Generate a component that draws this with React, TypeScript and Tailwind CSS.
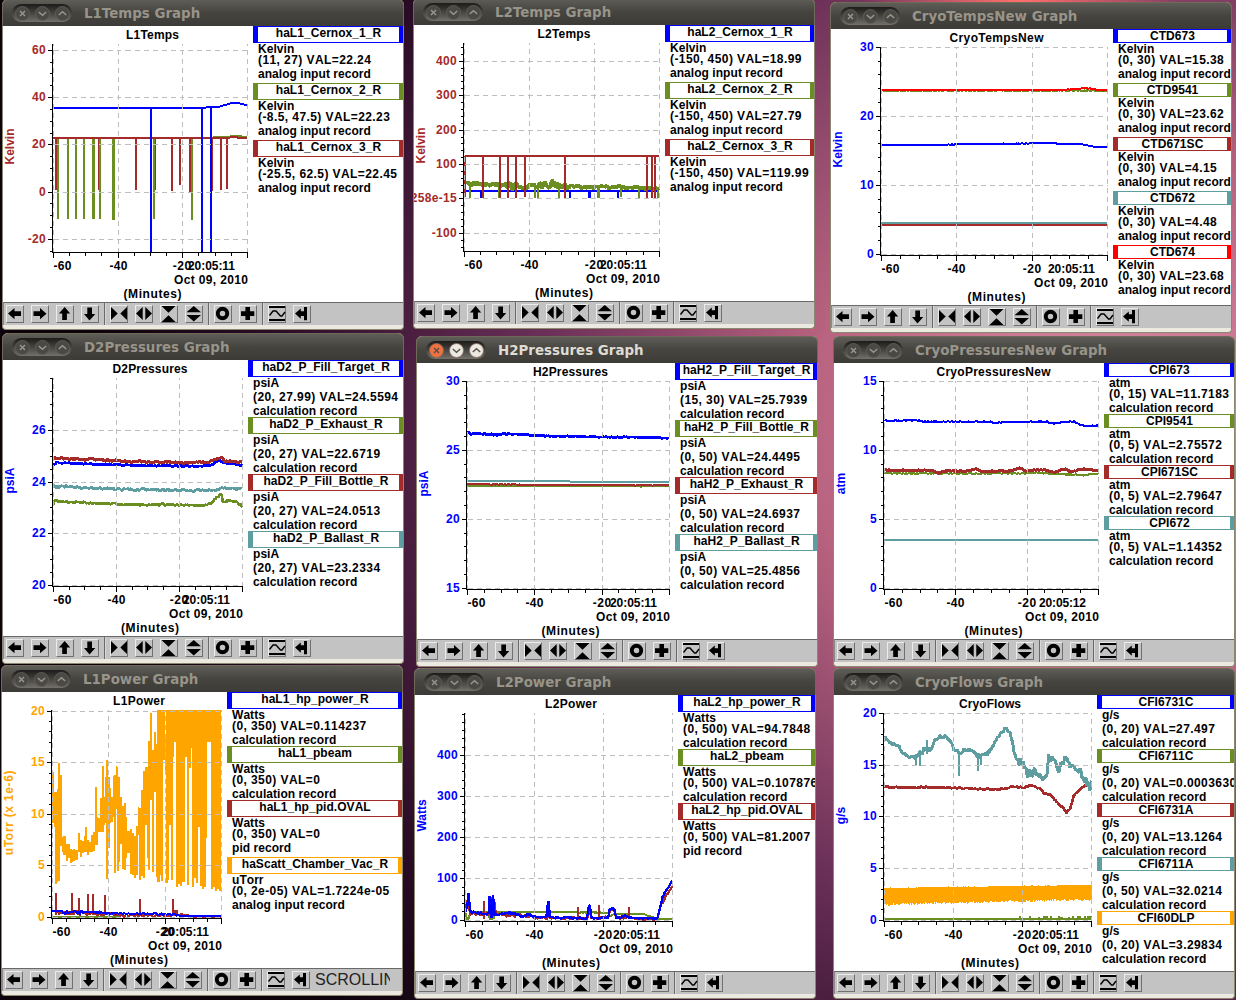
import type { ReactNode } from "react"

// All trace coordinates live on a grid with 3 units per pixel
const GRID = 3
const PLOT_WIDTH = 400
const PLOT_HEIGHT = 276

const BLUE = "#0000ff"
const OLIVE = "#6b8e23"
const BROWN = "#a52a2a"
const TEAL = "#5f9ea0"
const ORANGE = "#ffa500"
const RED = "#ff0000"

const FRAME: Record<string, string> = {
    [BLUE]: "border-[#0000ff]",
    [OLIVE]: "border-[#6b8e23]",
    [BROWN]: "border-[#a52a2a]",
    [TEAL]: "border-[#5f9ea0]",
    [ORANGE]: "border-[#ffa500]",
    [RED]: "border-[#ff0000]",
}

// x, y and an optional noise amplitude that holds until the next point
type Point = [number, number, number?]

type Trace =
    | { kind: "line"; color: string; points: Point[]; noise?: number; width?: number }
    | { kind: "spikes"; color: string; from: number; at: [number, number, number?][] }
    | { kind: "band"; color: string; end: number; columns: [number, number, number][] }

type Channel = { name: string; color: string; lines: [string, string, string] }

type Graph = {
    name: string
    place: string
    origin: [number, number]
    left: number
    right: number
    unit: string
    axisColor: string
    time: string
    // two reference values with their positions on the grid
    scale: { hi: number; hiAt: number; lo: number; loAt: number }
    major: number
    minor: number
    zeroLabel?: string
    titleLength: number
    legend: string
    channels: Channel[]
    traces: Trace[]
    active?: boolean
    status?: string
}

function channel(name: string, color: string, unit: string, value: string, record: string): Channel {
    return { name, color, lines: [unit, value, `${record} record`] }
}

function random(seed: number) {
    let s = seed
    return () => {
        s = (s * 16807) % 2147483647
        return s / 2147483647
    }
}

function linePath(points: Point[], noise: number) {
    const next = random(Math.round(points[0][1] * 31 + points.length * 7 + 11))
    let d = `M${points[0][0]} ${points[0][1]}`
    for (let i = 1; i < points.length; i++) {
        const [x0, y0, n] = points[i - 1]
        const [x1, y1] = points[i]
        const amp = n ?? noise
        if (!amp) {
            d += `L${x1} ${y1}`
            continue
        }
        const steps = Math.max(1, Math.round((x1 - x0) / 3))
        for (let k = 1; k <= steps; k++) {
            const t = k / steps
            const y = y0 + (y1 - y0) * t + (next() - 0.5) * 2 * amp
            d += `L${(x0 + (x1 - x0) * t).toFixed(1)} ${y.toFixed(1)}`
        }
    }
    return d
}

function bandPath(columns: [number, number, number][], end: number) {
    return columns
        .map(([x, top, bottom], i) => {
            const to = i + 1 < columns.length ? columns[i + 1][0] : end
            return `M${x} ${top}H${to}V${bottom}H${x}Z`
        })
        .join("")
}

const flowNoise = random(77)
const flowBand: [number, number, number][] = Array.from({ length: 207 }, (_, i) => {
    const t = i / 207
    return [181 + i * 3, 678 - 9 * t - (flowNoise() > 0.85 ? 2 : 0), 724 - 15 * t + flowNoise() * 7]
})

const vacuumBand: [number, number, number][] = [
    [37, 215, 370], [41, 275, 380], [46, 275, 553], [50, 267, 545], [54, 190, 543],
    [60, 226, 437], [65, 410, 455], [70, 408, 465], [77, 432, 482], [84, 432, 475],
    [89, 447, 488], [95, 450, 485], [100, 447, 482], [106, 450, 480], [113, 400, 455],
    [119, 420, 470], [125, 422, 458], [131, 408, 456], [136, 382, 456], [141, 420, 464],
    [147, 427, 457], [153, 405, 455], [159, 395, 452], [164, 262, 435], [170, 352, 434],
    [174, 355, 396], [180, 293, 395], [186, 198, 395], [192, 290, 375], [195, 232, 370],
    [198, 180, 536], [204, 232, 443], [209, 265, 370], [214, 292, 365], [219, 228, 350],
    [222, 225, 520], [228, 198, 328], [231, 200, 512], [234, 230, 512], [237, 232, 485],
    [240, 290, 432], [246, 318, 508], [251, 308, 510], [257, 350, 475], [262, 392, 460],
    [270, 387, 523], [276, 400, 525], [282, 408, 535], [288, 378, 525], [294, 322, 405],
    [298, 325, 540], [303, 270, 528], [309, 212, 535], [314, 200, 375], [320, 200, 473],
    [324, 123, 510], [330, 40, 300], [336, 150, 515], [342, 95, 277], [348, 132, 530],
    [352, 30, 545], [360, 30, 525], [364, 30, 543], [369, 30, 180], [375, 118, 215],
    [378, 30, 550], [385, 30, 540], [388, 30, 375], [393, 30, 540], [399, 30, 172],
    [402, 30, 127], [408, 30, 562], [414, 30, 553], [420, 30, 558], [426, 30, 545],
    [435, 30, 172], [441, 30, 555], [447, 30, 205], [453, 30, 145], [456, 30, 562],
    [462, 30, 535], [468, 30, 550], [474, 30, 380], [480, 30, 558], [486, 30, 566],
    [492, 30, 562], [498, 30, 415], [501, 30, 127], [513, 30, 568], [519, 30, 560],
    [525, 30, 572], [532, 30, 568], [537, 30, 572],
]

const GRAPHS: Graph[] = [
    {
        name: "L1Temps",
        place: "left-[2px] top-[-1px]",
        origin: [9, 78],
        left: 160,
        right: 742,
        unit: "Kelvin",
        axisColor: BROWN,
        time: "20:05:11",
        scale: { hi: 60, hiAt: 151, lo: -20, loAt: 718 },
        major: 20,
        minor: 5,
        titleLength: 53,
        legend: "w-[150px]",
        channels: [
            channel("haL1_Cernox_1_R", BLUE, "Kelvin", "(11, 27) VAL=22.24", "analog input"),
            channel("haL1_Cernox_2_R", OLIVE, "Kelvin", "(-8.5, 47.5) VAL=22.23", "analog input"),
            channel("haL1_Cernox_3_R", BROWN, "Kelvin", "(-25.5, 62.5) VAL=22.45", "analog input"),
        ],
        traces: [
            { kind: "spikes", color: BROWN, from: 414, at: [[168, 570], [296, 570], [408, 570], [465, 570], [516, 573], [540, 555], [571, 575], [636, 573], [663, 570], [681, 567]] },
            { kind: "spikes", color: OLIVE, from: 414, at: [[174, 657], [204, 657], [228, 657], [252, 657], [281, 657, 9], [300, 657], [341, 659, 9], [462, 657], [576, 659]] },
            { kind: "line", color: OLIVE, points: [[640, 411], [690, 411], [692, 407], [722, 407], [725, 410], [742, 411]] },
            { kind: "line", color: BROWN, points: [[160, 414], [688, 414], [692, 411], [712, 411], [715, 414], [742, 414]] },
            { kind: "spikes", color: BLUE, from: 324, at: [[453, 756], [606, 756], [633, 756]] },
            { kind: "line", color: BLUE, points: [[160, 324], [610, 324], [625, 321], [655, 321], [665, 318], [682, 313], [695, 309], [714, 309], [727, 312], [742, 316]] },
        ],
    },
    {
        name: "L2Temps",
        place: "left-[413px] top-[-2px]",
        origin: [6, 75],
        left: 157,
        right: 742,
        unit: "Kelvin",
        axisColor: BROWN,
        time: "20:05:11",
        scale: { hi: 400, hiAt: 184, lo: -100, loAt: 700 },
        major: 100,
        minor: 20,
        zeroLabel: "258e-15",
        titleLength: 53,
        legend: "w-[149px]",
        channels: [
            channel("haL2_Cernox_1_R", BLUE, "Kelvin", "(-150, 450) VAL=18.99", "analog input"),
            channel("haL2_Cernox_2_R", OLIVE, "Kelvin", "(-150, 450) VAL=27.79", "analog input"),
            channel("haL2_Cernox_3_R", BROWN, "Kelvin", "(-150, 450) VAL=119.99", "analog input"),
        ],
        traces: [
            { kind: "spikes", color: BLUE, from: 573, at: [[207, 593, 8], [473, 593], [532, 593, 9], [618, 593]] },
            { kind: "line", color: BLUE, points: [[158, 573], [742, 573]] },
            { kind: "spikes", color: OLIVE, from: 560, at: [[174, 593], [260, 593], [369, 593], [378, 593], [441, 593], [559, 593, 8], [562, 593], [627, 590], [681, 593], [738, 593]] },
            { kind: "line", color: OLIVE, width: 11, points: [[158, 550, 6], [250, 555, 6], [285, 557, 13], [325, 562, 9], [380, 556, 11], [400, 550, 14], [440, 555, 9], [465, 560, 4], [620, 562, 4], [742, 566]] },
            { kind: "spikes", color: BROWN, from: 467, at: [[160, 590], [213, 593], [264, 595], [288, 593], [312, 593], [339, 590], [459, 593], [705, 593], [720, 593], [729, 593]] },
            { kind: "line", color: BROWN, points: [[158, 468], [742, 468]] },
        ],
    },
    {
        name: "CryoTempsNew",
        place: "left-[830px] top-[2px]",
        origin: [21, 87],
        left: 172,
        right: 850,
        unit: "Kelvin",
        axisColor: BLUE,
        time: "20:05:11",
        scale: { hi: 30, hiAt: 142, lo: 0, loAt: 763 },
        major: 10,
        minor: 2,
        titleLength: 94,
        legend: "w-[118px]",
        channels: [
            channel("CTD673", BLUE, "Kelvin", "(0, 30) VAL=15.38", "analog input"),
            channel("CTD9541", OLIVE, "Kelvin", "(0, 30) VAL=23.62", "analog input"),
            channel("CTD671SC", BROWN, "Kelvin", "(0, 30) VAL=4.15", "analog input"),
            channel("CTD672", TEAL, "Kelvin", "(0, 30) VAL=4.48", "analog input"),
            channel("CTD674", RED, "Kelvin", "(0, 30) VAL=23.68", "analog input"),
        ],
        traces: [
            { kind: "line", color: BLUE, points: [[172, 435], [370, 435, 2], [410, 432, 1], [580, 431, 1], [640, 429], [690, 429], [700, 431], [770, 432], [800, 438], [815, 441], [850, 441]] },
            { kind: "line", color: OLIVE, noise: 1.5, points: [[172, 272], [850, 272]] },
            { kind: "line", color: TEAL, noise: 1.5, points: [[172, 669], [850, 669]] },
            { kind: "line", color: BROWN, points: [[172, 675], [850, 675]] },
            { kind: "line", color: RED, noise: 1, points: [[172, 270], [710, 270], [760, 267], [785, 264], [820, 269], [850, 272]] },
        ],
    },
    {
        name: "D2Pressures",
        place: "left-[2px] top-[333px]",
        origin: [9, 81],
        left: 160,
        right: 727,
        unit: "psiA",
        axisColor: BLUE,
        time: "20:05:11",
        scale: { hi: 26, hiAt: 292, lo: 20, loAt: 757 },
        major: 2,
        minor: 0.5,
        titleLength: 75,
        legend: "w-[155px]",
        channels: [
            channel("haD2_P_Fill_Target_R", BLUE, "psiA", "(20, 27.99) VAL=24.5594", "calculation"),
            channel("haD2_P_Exhaust_R", OLIVE, "psiA", "(20, 27) VAL=22.6719", "calculation"),
            channel("haD2_P_Fill_Bottle_R", BROWN, "psiA", "(20, 27) VAL=24.0513", "calculation"),
            channel("haD2_P_Ballast_R", TEAL, "psiA", "(20, 27) VAL=23.2334", "calculation"),
        ],
        traces: [
            { kind: "line", color: BLUE, noise: 2, width: 8, points: [[160, 398, 5], [172, 389], [300, 394], [450, 398], [600, 400], [630, 398], [650, 386], [660, 382], [672, 391], [710, 393], [727, 400]] },
            { kind: "line", color: TEAL, noise: 4, width: 8, points: [[160, 461, 6], [210, 462, 4], [350, 468], [500, 471], [600, 473, 3], [650, 471, 3], [668, 466], [727, 467]] },
            { kind: "line", color: OLIVE, noise: 3, width: 8, points: [[160, 515], [164, 504], [250, 509], [400, 515], [500, 515], [600, 517], [630, 512], [650, 494], [665, 482], [668, 508], [690, 500], [710, 508], [727, 520]] },
            { kind: "line", color: BROWN, noise: 3.5, width: 9, points: [[160, 375], [300, 381], [420, 386], [540, 389, 2.5], [630, 387, 2.5], [655, 374], [668, 374], [672, 385], [727, 387]] },
        ],
    },
    {
        name: "H2Pressures",
        place: "left-[416px] top-[336px]",
        origin: [15, 90],
        left: 166,
        right: 772,
        unit: "psiA",
        axisColor: BLUE,
        time: "20:05:11",
        scale: { hi: 30, hiAt: 145, lo: 15, loAt: 766 },
        major: 5,
        minor: 1,
        titleLength: 75,
        legend: "w-[142px]",
        active: true,
        channels: [
            channel("haH2_P_Fill_Target_R", BLUE, "psiA", "(15, 30) VAL=25.7939", "calculation"),
            channel("haH2_P_Fill_Bottle_R", OLIVE, "psiA", "(0, 50) VAL=24.4495", "calculation"),
            channel("haH2_P_Exhaust_R", BROWN, "psiA", "(0, 50) VAL=24.6937", "calculation"),
            channel("haH2_P_Ballast_R", TEAL, "psiA", "(0, 50) VAL=25.4856", "calculation"),
        ],
        traces: [
            { kind: "line", color: TEAL, noise: 0.8, points: [[166, 444], [450, 444, 0], [490, 447, 0], [772, 447]] },
            { kind: "line", color: OLIVE, noise: 1, points: [[166, 458], [772, 460]] },
            { kind: "line", color: BROWN, noise: 1, points: [[166, 453], [400, 456], [772, 457]] },
            { kind: "line", color: BLUE, noise: 2, width: 8, points: [[166, 301, 4], [250, 304, 4], [290, 303], [400, 309], [600, 312], [772, 315]] },
        ],
    },
    {
        name: "CryoPressuresNew",
        place: "left-[833px] top-[336px]",
        origin: [30, 90],
        left: 181,
        right: 823,
        unit: "atm",
        axisColor: BLUE,
        time: "20:05:12",
        scale: { hi: 15, hiAt: 145, lo: 0, loAt: 766 },
        major: 5,
        minor: 1,
        titleLength: 114,
        legend: "w-[130px]",
        channels: [
            channel("CPI673", BLUE, "atm", "(0, 15) VAL=11.7183", "calculation"),
            channel("CPI9541", OLIVE, "atm", "(0, 5) VAL=2.75572", "calculation"),
            channel("CPI671SC", BROWN, "atm", "(0, 5) VAL=2.79647", "calculation"),
            channel("CPI672", TEAL, "atm", "(0, 5) VAL=1.14352", "calculation"),
        ],
        traces: [
            { kind: "line", color: BLUE, noise: 2, points: [[181, 264], [280, 262], [300, 266], [500, 266], [515, 271], [540, 267], [670, 266], [690, 272], [720, 267], [750, 266], [780, 279], [823, 279]] },
            { kind: "line", color: OLIVE, noise: 2, points: [[181, 421], [600, 421], [640, 419], [690, 423], [780, 426], [823, 423]] },
            { kind: "line", color: BROWN, noise: 2, width: 9, points: [[181, 412], [320, 412], [345, 420], [370, 412], [420, 415], [455, 409], [480, 416], [560, 414], [585, 404], [605, 414], [660, 409], [690, 418], [720, 408], [745, 416], [770, 408], [823, 413]] },
            { kind: "line", color: TEAL, points: [[181, 621], [823, 621]] },
        ],
    },
    {
        name: "L1Power",
        place: "left-[1px] top-[665px]",
        origin: [-114, -24],
        left: 37,
        right: 544,
        unit: "uTorr (x 1e-6)",
        axisColor: ORANGE,
        time: "20:05:11",
        scale: { hi: 20, hiAt: 34, lo: 0, loAt: 652 },
        major: 5,
        minor: 1,
        titleLength: 52,
        legend: "w-[175px]",
        status: "SCROLLING",
        channels: [
            channel("haL1_hp_power_R", BLUE, "Watts", "(0, 350) VAL=0.114237", "calculation"),
            channel("haL1_pbeam", OLIVE, "Watts", "(0, 350) VAL=0", "calculation"),
            channel("haL1_hp_pid.OVAL", BROWN, "Watts", "(0, 350) VAL=0", "pid"),
            channel("haScatt_Chamber_Vac_R", ORANGE, "uTorr", "(0, 2e-05) VAL=1.7224e-05", "analog input"),
        ],
        traces: [
            { kind: "band", color: ORANGE, end: 544, columns: vacuumBand },
            { kind: "line", color: BROWN, noise: 8, points: [[48, 638], [200, 641, 4], [240, 646, 5], [350, 646, 6], [425, 645, 3], [490, 652, 1], [544, 652]] },
            { kind: "spikes", color: BROWN, from: 645, at: [[48, 580], [96, 580], [117, 595], [144, 583], [159, 583], [195, 586], [300, 598], [399, 598], [405, 631, 15]] },
            { kind: "line", color: OLIVE, points: [[37, 651], [240, 651]] },
            { kind: "line", color: BLUE, noise: 1, points: [[37, 633], [66, 633, 8], [86, 637, 1], [100, 634, 7], [128, 637, 1], [165, 637, 7], [182, 637, 1], [200, 640], [340, 641, 3], [410, 645], [425, 649, 0], [544, 648]] },
        ],
    },
    {
        name: "L2Power",
        place: "left-[414px] top-[668px]",
        origin: [9, 99],
        left: 160,
        right: 781,
        unit: "Watts",
        axisColor: BLUE,
        time: "20:05:11",
        scale: { hi: 400, hiAt: 280, lo: 0, loAt: 774 },
        major: 100,
        minor: 20,
        titleLength: 52,
        legend: "w-[137px]",
        channels: [
            channel("haL2_hp_power_R", BLUE, "Watts", "(0, 500) VAL=94.7848", "calculation"),
            channel("haL2_pbeam", OLIVE, "Watts", "(0, 500) VAL=0.107876", "calculation"),
            channel("haL2_hp_pid.OVAL", BROWN, "Watts", "(0, 500) VAL=81.2007", "pid"),
        ],
        traces: [
            { kind: "line", color: OLIVE, noise: 1, points: [[160, 750], [165, 772], [170, 770], [176, 750], [228, 750], [233, 770], [245, 770], [250, 750], [405, 750], [588, 752], [594, 762], [606, 756], [700, 757], [706, 762], [722, 764], [728, 771, 0], [781, 771]] },
            { kind: "line", color: BROWN, noise: 5, width: 7, points: [[160, 745], [169, 705], [174, 755], [230, 757], [236, 710], [246, 715], [252, 758], [350, 763], [404, 768], [409, 725], [413, 768, 4], [525, 771, 3], [532, 740], [538, 770, 3], [588, 766, 3], [596, 742], [606, 745], [612, 766], [700, 772, 2], [735, 773, 4], [748, 727], [765, 697], [781, 674]] },
            { kind: "spikes", color: BROWN, from: 770, at: [[216, 718], [498, 735], [560, 730], [651, 735]] },
            { kind: "line", color: BLUE, noise: 4, width: 7, points: [[160, 750], [165, 740], [170, 693], [174, 750], [230, 756], [233, 705], [238, 765], [243, 698], [248, 758], [290, 752], [330, 763], [350, 758], [370, 765, 1], [403, 766], [408, 718, 1], [411, 718, 1], [413, 766, 3], [525, 769, 2], [531, 730], [534, 733, 2], [539, 768, 2], [588, 768, 1], [593, 741, 1], [606, 738, 2], [613, 768], [640, 763, 2], [660, 768, 1], [735, 770, 3], [746, 728], [754, 700], [765, 684], [781, 656]] },
        ],
    },
    {
        name: "CryoFlows",
        place: "left-[833px] top-[668px]",
        origin: [30, 99],
        left: 181,
        right: 803,
        unit: "g/s",
        axisColor: BLUE,
        time: "20:05:11",
        scale: { hi: 20, hiAt: 154, lo: 0, loAt: 774 },
        major: 5,
        minor: 1,
        titleLength: 62,
        legend: "w-[137px]",
        channels: [
            channel("CFI6731C", BLUE, "g/s", "(0, 20) VAL=27.497", "calculation"),
            channel("CFI6711C", OLIVE, "g/s", "(0, 20) VAL=0.000363012", "calculation"),
            channel("CFI6731A", BROWN, "g/s", "(0, 20) VAL=13.1264", "calculation"),
            channel("CFI6711A", TEAL, "g/s", "(0, 50) VAL=32.0214", "calculation"),
            channel("CFI60DLP", ORANGE, "g/s", "(0, 20) VAL=3.29834", "calculation"),
        ],
        traces: [
            { kind: "band", color: ORANGE, end: 803, columns: flowBand },
            { kind: "line", color: OLIVE, points: [[181, 771], [803, 771]] },
            { kind: "spikes", color: OLIVE, from: 772, at: [[588, 762], [618, 762], [645, 765], [665, 762, 15], [680, 762], [705, 762], [711, 765, 12], [734, 765], [747, 762], [766, 762, 12], [782, 762], [795, 762, 15]] },
            { kind: "line", color: BROWN, noise: 2.5, width: 8, points: [[181, 376], [350, 376], [450, 380], [520, 383], [550, 380], [562, 373], [600, 376], [625, 370], [650, 382], [660, 394], [682, 399], [700, 423], [715, 435], [727, 453], [738, 440], [750, 400], [770, 380], [790, 368], [803, 363]] },
            { kind: "spikes", color: TEAL, from: 275, at: [[276, 313], [288, 313], [404, 341], [463, 328], [472, 308], [308, 235]] },
            { kind: "line", color: TEAL, noise: 7, width: 9, points: [[181, 226, 4], [200, 242, 4], [222, 250, 5], [238, 277, 5], [260, 285], [275, 288, 13], [290, 280], [300, 260], [320, 262, 5], [335, 232, 5], [350, 225, 5], [368, 222, 5], [380, 238, 5], [390, 266, 6], [410, 270], [435, 258], [450, 276], [475, 283], [498, 268, 5], [515, 235, 5], [530, 215, 6], [545, 196, 6], [560, 215, 5], [570, 265], [580, 296, 13], [600, 310, 10], [612, 337, 12], [635, 330, 13], [655, 350, 9], [670, 338, 12], [674, 285, 12], [692, 300, 12], [702, 328, 10], [722, 290, 12], [735, 308], [765, 328, 14], [783, 355, 16], [797, 380, 12], [803, 365]] },
        ],
    },
]

function Plot({ graph }: { graph: Graph }) {
    const { origin, scale, axisColor } = graph
    const px = (v: number) => Math.floor((v - origin[0]) / GRID) + 0.5
    const py = (v: number) => Math.floor((v - origin[1]) / GRID) + 0.5

    const left = px(graph.left)
    const right = px(graph.right)
    const axis = left - 1
    const top = 18
    const bottom = 226.5
    const center = (left + right) / 2 + 2
    const xAt = (m: number) => px(graph.left + ((graph.right - graph.left) * (m + 60)) / 60)
    const yAt = (v: number) => py(scale.loAt + ((scale.hiAt - scale.loAt) * (v - scale.lo)) / (scale.hi - scale.lo))

    const majors: number[] = []
    for (let v = scale.lo; v <= scale.hi + 0.001; v += graph.major) majors.push(v)
    const minors: number[] = []
    for (let v = scale.lo - graph.major; v < scale.hi + graph.major * 2; v += graph.minor) {
        const y = yAt(v)
        if (y >= top && y <= bottom) minors.push(v)
    }
    const clip = `clip-${graph.name}`

    return (
        <svg
            width={PLOT_WIDTH}
            height={PLOT_HEIGHT}
            viewBox={`0 0 ${PLOT_WIDTH} ${PLOT_HEIGHT}`}
            className="col-start-1 row-start-1 block font-['Liberation_Sans',sans-serif] text-[12px] font-bold"
        >
            <clipPath id={clip}>
                <rect x={left - 0.5} y={top} width={right - left + 1} height={bottom - top} />
            </clipPath>
            <g clipPath={`url(#${clip})`}>
                <g transform={`scale(${1 / GRID}) translate(${-origin[0]} ${-origin[1]})`} shapeRendering="crispEdges" fill="none">
                    {graph.traces.map((trace, i) => {
                        if (trace.kind === "band") {
                            return <path key={i} d={bandPath(trace.columns, trace.end)} fill={trace.color} />
                        }
                        if (trace.kind === "spikes") {
                            return trace.at.map(([x, y, w]) => (
                                <path key={`${i}-${x}`} d={`M${x} ${trace.from}V${y}`} stroke={trace.color} strokeWidth={w ?? 6} />
                            ))
                        }
                        return (
                            <path key={i} d={linePath(trace.points, trace.noise ?? 0)} stroke={trace.color} strokeWidth={trace.width ?? 6} strokeLinejoin="bevel" />
                        )
                    })}
                </g>
            </g>

            {/* Grid */}
            <g stroke="#bebebe" strokeDasharray="5 4" shapeRendering="crispEdges">
                {majors.map((v) => (
                    <path key={v} d={`M${left} ${yAt(v)}H${right}`} />
                ))}
                {[-60, -40, -20, 0].map((m) => (
                    <path key={m} d={`M${xAt(m)} ${bottom}V${top}`} />
                ))}
            </g>

            {/* Axes */}
            <g stroke="#000" shapeRendering="crispEdges" fill="none">
                <path d={`M${axis} ${top}V${bottom}M${left - 0.5} ${bottom}H${right + 0.5}`} />
                {majors.map((v) => (
                    <path key={v} d={`M${axis - 5} ${yAt(v)}H${axis}`} />
                ))}
                {minors.map((v) => (
                    <path key={v} d={`M${axis - 2.5} ${yAt(v)}H${axis}`} />
                ))}
                {Array.from({ length: 13 }, (_, i) => i * 5 - 60).map((m) => (
                    <path key={m} d={`M${xAt(m)} ${bottom}v${m % 20 === 0 ? 5.5 : 3}`} />
                ))}
            </g>

            <g fill={axisColor} textAnchor="end" letterSpacing="0.3">
                {majors.map((v) => (
                    <text key={v} x={axis - 6.5} y={yAt(v) + 3.5}>
                        {v === 0 && graph.zeroLabel ? graph.zeroLabel : v}
                    </text>
                ))}
            </g>
            <text transform="translate(11 120.5) rotate(-90)" textAnchor="middle" fill={axisColor} letterSpacing={graph.unit.length > 8 ? 0.7 : 0}>
                {graph.unit}
            </text>

            <g textAnchor="middle">
                <text x={left + 9} y={243.5} textLength={18}>-60</text>
                <text x={xAt(-40)} y={243.5} textLength={18}>-40</text>
                <text x={xAt(-20) - 0.5} y={243.5} textLength={18.5}>-20</text>
                <text x={right - 36} y={243.5} textLength={47}>{graph.time}</text>
                <text x={right - 36.5} y={257.5} textLength={74}>Oct 09, 2010</text>
                <text x={center} y={271.5} textLength={58}>(Minutes)</text>
                <text x={center} y={13} textLength={graph.titleLength}>{graph.name}</text>
            </g>
        </svg>
    )
}

// Lines are packed to the ink height, so text without descenders takes less room
function InkLine({ text, spaced }: { text: string; spaced?: boolean }) {
    const deep = /[gjpqy_(,]/.test(text)
    return (
        <div className={`flex whitespace-nowrap ${deep ? "h-[14px]" : "h-[11px]"} ${spaced ? "tracking-[0.42px]" : "tracking-[0.05px]"}`}>
            <span className="leading-[12px]">{text}</span>
        </div>
    )
}

function Legend({ channels, width }: { channels: Channel[]; width: string }) {
    return (
        <div className={`z-10 col-start-1 row-start-1 justify-self-end overflow-hidden bg-white font-['Liberation_Sans',sans-serif] text-[12px] font-bold text-black [font-kerning:none] ${width}`}>
            {channels.map((c) => (
                <div key={c.name} className="pb-px">
                    <div className={`flex justify-center border-y border-r-4 border-l-5 pb-px ${FRAME[c.color]}`}>
                        <InkLine text={c.name} />
                    </div>
                    <div className="pl-[5px]">
                        <InkLine text={c.lines[0]} />
                        <InkLine text={c.lines[1]} spaced />
                        <InkLine text={c.lines[2]} />
                    </div>
                </div>
            ))}
        </div>
    )
}

function ToolButton({ children }: { children: ReactNode }) {
    return (
        <button className="h-[18px] w-[18px] shrink-0 border border-t-[#ececec] border-r-[#707070] border-b-[#707070] border-l-[#ececec] bg-[#c3c3c3]">
            <svg width="18" height="18" viewBox="0 0 18 18" className="-m-px block max-w-none" fill="#000">
                {children}
            </svg>
        </button>
    )
}

function Divider() {
    return <div className="-mt-[2px] h-[22px] w-px shrink-0 bg-[#696969] shadow-[1px_0_0_#d8d8d8]" />
}

const ARROW = "M2 8.5L8.5 3V6.3H15V11H8.5V14.3Z"

function Toolbar({ status }: { status?: string }) {
    return (
        <div className="flex h-[23px] items-start border-t border-l border-t-[#696969] border-l-[#8a8a8a] bg-[#c3c3c3] pt-[2px] pl-[2px]">
            <div className="flex gap-[7px] pr-[5px]">
                <ToolButton><path d={ARROW} /></ToolButton>
                <ToolButton><path d={ARROW} transform="rotate(180 8.75 8.6)" /></ToolButton>
                <ToolButton><path d={ARROW} transform="rotate(90 8.6 8.6)" /></ToolButton>
                <ToolButton><path d={ARROW} transform="rotate(-90 8.75 8.75)" /></ToolButton>
            </div>
            <Divider />
            <div className="flex gap-[7px] px-[5px]">
                <ToolButton><path d="M1 2L7.7 8.5L1 15ZM17 2L10.3 8.5L17 15Z" /></ToolButton>
                <ToolButton><path d="M7.7 2L1 8.5L7.7 15ZM10.3 2L17 8.5L10.3 15Z" /></ToolButton>
                <ToolButton><path d="M1.5 1H15.5L8.5 7.8ZM1.5 17H15.5L8.5 10.2Z" /></ToolButton>
                <ToolButton><path d="M1.5 7.3H16L8.75 1ZM1.5 10H16L8.75 16.5Z" /></ToolButton>
            </div>
            <Divider />
            <div className="flex gap-[7px] px-[5px]">
                <ToolButton><circle cx="8.5" cy="8.5" r="4.7" fill="none" stroke="#000" strokeWidth="3.9" /></ToolButton>
                <ToolButton><path d="M6.4 2H11V6.3H15.3V11H11V15H6.4V11H2V6.3H6.4Z" /></ToolButton>
            </div>
            <Divider />
            <div className="flex gap-[7px] px-[5px]">
                <ToolButton>
                    <path d="M1 1H17V3H1ZM1 14H17V16H1Z" />
                    <path d="M1.5 10.5L5 6H8L12.5 11H14L17 7" fill="none" stroke="#000" strokeWidth="1.4" />
                </ToolButton>
                <ToolButton><path d="M2 8.5L7.8 3.4V6.3H11V2H14V15.3H11V11H7.8V13.8Z" /></ToolButton>
            </div>
            {status && (
                <div className="w-[75px] overflow-hidden font-['Liberation_Sans',sans-serif] text-[16px] leading-[18px] whitespace-nowrap text-[#222]">
                    {status}
                </div>
            )}
        </div>
    )
}

const CONTROLS = ["M5 5L10 10M10 5L5 10", "M3.8 6L7.5 9.3L11.2 6", "M3.8 9L7.5 5.7L11.2 9"]

function TitleBar({ title, active }: { title: string; active?: boolean }) {
    return (
        <div className="-mx-px flex h-[27px] items-center rounded-t-[6px] border border-b-0 border-[#6f6a58] bg-linear-to-b from-[#5e5d57] via-[#45443f] to-[#3c3b37] pl-[9px]">
            <div className="flex h-[18px] w-[60px] items-center justify-between rounded-full bg-linear-to-b from-[#1d1c1a] to-[#73716a] px-[2.5px]">
                {CONTROLS.map((d, i) => (
                    <svg key={d} width="15" height="15" viewBox="0 0 15 15" fill="none">
                        <circle cx="7.5" cy="7.5" r="7" fill={active ? (i === 0 ? "#f0703f" : "#ece9e2") : "#4a4944"} stroke={active ? "#8a6a58" : "#62605a"} strokeWidth="0.8" />
                        <path d={d} stroke={active ? "#55524c" : "#9a978f"} strokeWidth="1.4" />
                    </svg>
                ))}
            </div>
            <span className={`ml-[12px] pt-px font-['DejaVu_Sans',sans-serif] text-[13.4px] leading-[26px] font-bold whitespace-nowrap ${active ? "text-[#dfdbd2]" : "text-[#98948a]"}`}>
                {title}
            </span>
        </div>
    )
}

function GraphWindow({ graph }: { graph: Graph }) {
    return (
        <section className={`absolute w-[402px] rounded-t-[6px] rounded-b-[4px] border-x border-b border-[#8c8770] bg-[#ece9e0] pb-[4px] ${graph.place}`}>
            <TitleBar title={`${graph.name} Graph`} active={graph.active} />
            <div className="grid h-[276px] grid-cols-1 overflow-hidden bg-white">
                <Plot graph={graph} />
                <Legend channels={graph.channels} width={graph.legend} />
            </div>
            <Toolbar status={graph.status} />
        </section>
    )
}

export default function App() {
    return (
        <main className="relative h-[1000px] w-[1236px] overflow-hidden bg-[radial-gradient(ellipse_160px_60px_at_1020px_0px,#ff6f6c,transparent),radial-gradient(ellipse_900px_780px_at_1120px_430px,#dc8da7,#b8637f_35%,#6b3058_65%,#2a0c26_95%,#0c030b_115%)]">
            {GRAPHS.map((graph) => (
                <GraphWindow key={graph.name} graph={graph} />
            ))}
        </main>
    )
}
